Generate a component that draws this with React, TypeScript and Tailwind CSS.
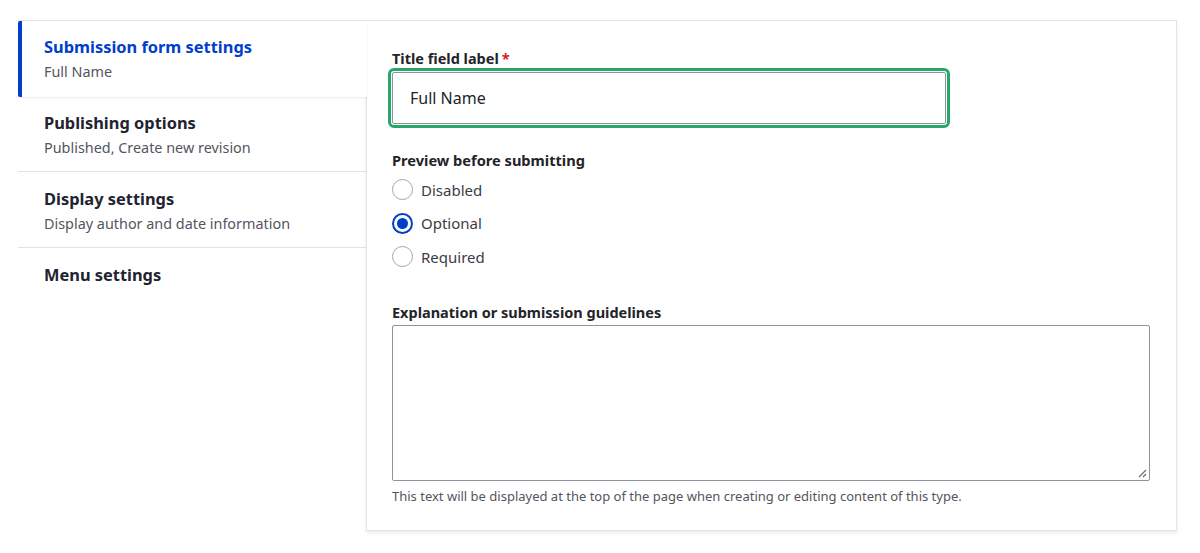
import React from "react";

const font = { fontFamily: '"Noto Sans", "Open Sans", sans-serif' };

type Tab = { title: string; summary?: string; active?: boolean; box: string };

const tabs: Tab[] = [
  { title: "Submission form settings", summary: "Full Name", active: true, box: "h-[76px] pt-[14px]" },
  { title: "Publishing options", summary: "Published, Create new revision", box: "h-[75px] pt-[14px]" },
  { title: "Display settings", summary: "Display author and date information", box: "h-[76px] pt-[15px]" },
  { title: "Menu settings", box: "h-[60px] pt-[15px]" },
];

function Radio({ label, checked }: { label: string; checked?: boolean }) {
  return (
    <label className="flex items-center gap-[8px] h-[33.5px]">
      {checked ? (
        <span className="w-[21px] h-[21px] rounded-full border-[2px] border-[#003ecc] flex items-center justify-center">
          <span className="w-[11px] h-[11px] rounded-full bg-[#003ecc]" />
        </span>
      ) : (
        <span className="w-[21px] h-[21px] rounded-full border border-[#a4a6ad] bg-white" />
      )}
      <span className="text-[15px] text-[#3b3c45]">{label}</span>
    </label>
  );
}

export default function App() {
  return (
    <div className="w-[1200px] h-[553px] bg-white pt-[20px] pl-[18px]" style={font}>
      <div className="flex w-[1159px] border-t border-[#e4e4e7]">
        {/* vertical tab menu */}
        <ul className="w-[348px] flex flex-col">
          {tabs.map((t) => (
            <li
              key={t.title}
              className={
                t.active
                  ? `${t.box} relative z-10 -mr-px bg-white border-l-[4px] border-[#003ecc] rounded-bl-[2px] rounded-tl-[2px] pl-[22px] shadow-[0_1px_2px_rgba(0,0,0,0.08)]`
                  : `${t.box} border-b border-[#e4e4e7] last:border-b-0 pl-[26px]`
              }
            >
              <div
                className={`text-[16.4px] leading-[24px] font-bold ${
                  t.active ? "text-[#003ecc]" : "text-[#222330]"
                }`}
              >
                {t.title}
              </div>
              {t.summary && (
                <div className="text-[14.4px] leading-[26px] text-[#545560]">{t.summary}</div>
              )}
            </li>
          ))}
        </ul>

        {/* active pane */}
        <div className="flex-1 h-[510px] border-l border-r border-b border-[#e4e4e7] shadow-[0_2px_4px_rgba(0,0,0,0.08)] bg-white pl-[25px] pr-[25px] pt-[27px]">
          <div className="text-[14.5px] leading-[20px] font-bold text-[#232429]">
            Title field label<span className="text-[#d72222] ml-[3px]">*</span>
          </div>
          <div className="w-[562px] h-[60px] -ml-[4px] rounded-[6px] border-[3px] border-[#26a769] p-px">
            <div className="h-full rounded-[2px] border border-[#8e929c] bg-white flex items-center pl-[17px] text-[16px] text-[#232429]">
              Full Name
            </div>
          </div>

          <div className="mt-[22px] text-[14.6px] leading-[20px] font-bold text-[#232429]">
            Preview before submitting
          </div>
          <div className="flex flex-col mt-[3px]">
            <Radio label="Disabled" />
            <Radio label="Optional" checked />
            <Radio label="Required" />
          </div>

          <div className="mt-[28px] text-[14.5px] leading-[20px] font-bold text-[#232429]">
            Explanation or submission guidelines
          </div>
          <div className="relative mt-[3px] w-[758px] h-[156px] rounded-[2px] border border-[#8e929c] bg-white">
            <svg
              className="absolute right-[2px] bottom-[2px]"
              width="9"
              height="9"
              viewBox="0 0 9 9"
            >
              <path d="M8 1L1 8M8 5L5 8" stroke="#6b6d75" strokeWidth="1.2" />
            </svg>
          </div>
          <div className="mt-[6px] text-[13px] leading-[18px] text-[#545560]">
            This text will be displayed at the top of the page when creating or editing content of this type.
          </div>
        </div>
      </div>
    </div>
  );
}
